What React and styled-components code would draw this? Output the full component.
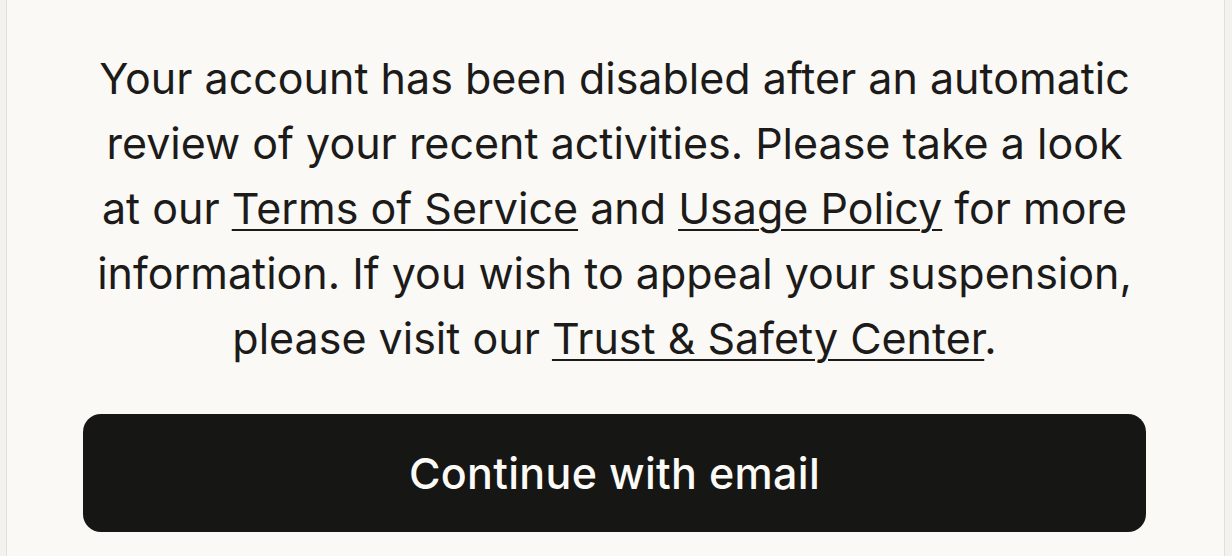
import React from "react";
import styled, { createGlobalStyle } from "styled-components";

const Global = createGlobalStyle`
  html, body {
    margin: 0;
    padding: 0;
    background: #f3f2ee;
  }
  #root {
    height: 556px;
    overflow: hidden;
  }
`;

const Page = styled.div`
  display: flex;
  justify-content: center;
  height: 556px;
  padding: 0 7px 0 6px;
  box-sizing: border-box;
`;

const Card = styled.main`
  flex: 1;
  display: flex;
  flex-direction: column;
  align-items: stretch;
  background: #faf9f6;
  border-left: 1px solid #e2e0da;
  border-right: 1px solid #e2e0da;
  padding: 46px 78px 24px 76px;
  box-sizing: border-box;
`;

const Message = styled.p`
  margin: 0;
  font-family: Inter, "Noto Sans", sans-serif;
  font-size: 43px;
  line-height: 65px;
  color: #1c1b19;
  text-align: center;
  letter-spacing: 0;
`;

const Link = styled.a`
  color: inherit;
  text-decoration: underline;
  text-decoration-thickness: 2px;
  text-underline-offset: 5px;
  cursor: pointer;
`;

const PrimaryButton = styled.button`
  margin-top: 43px;
  height: 118px;
  border: none;
  border-radius: 18px;
  background: #161614;
  color: #fbfaf7;
  font-family: Inter, "Noto Sans", sans-serif;
  font-size: 43px;
  font-weight: 500;
  letter-spacing: 0.3px;
  cursor: pointer;
`;

export default function App() {
  return (
    <>
      <Global />
      <Page>
        <Card>
          <Message>
            Your account has been disabled after an automatic
            <br />
            review of your recent activities. Please take a look
            <br />
            at our <Link>Terms of Service</Link> and <Link>Usage Policy</Link> for more
            <br />
            information. If you wish to appeal your suspension,
            <br />
            please visit our <Link>Trust &amp; Safety Center</Link>.
          </Message>
          <PrimaryButton>Continue with email</PrimaryButton>
        </Card>
      </Page>
    </>
  );
}
